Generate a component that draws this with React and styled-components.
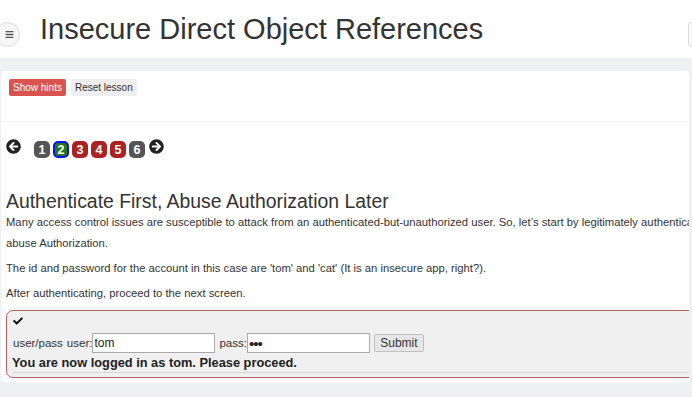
import React from "react";
import styled, { createGlobalStyle } from "styled-components";
import { FaArrowCircleLeft, FaArrowCircleRight, FaBars, FaCheck } from "react-icons/fa";

const GlobalStyle = createGlobalStyle`
  html, body {
    margin: 0;
    padding: 0;
    background: #ffffff;
    overflow: hidden;
  }
  body {
    font-family: "Liberation Sans", Arial, sans-serif;
    color: #333333;
  }
`;

const Page = styled.div`
  width: 692px;
  height: 397px;
  display: flex;
  flex-direction: column;
  overflow: hidden;
`;

const Header = styled.header`
  height: 58px;
  flex-shrink: 0;
  display: flex;
  align-items: center;
  background: #ffffff;
`;

const MenuButton = styled.button`
  width: 25px;
  height: 25px;
  margin: 10px 0 0 -5px;
  padding: 0 0 0 3px;
  border-radius: 50%;
  border: 1px solid #dddddd;
  background: #f6f6f6;
  color: #555555;
  display: flex;
  align-items: center;
  justify-content: center;
  font-size: 9px;
`;

const Title = styled.h1`
  flex: 1;
  margin: 0 0 0 20px;
  font-size: 29px;
  font-weight: 400;
  color: #333333;
  line-height: 1;
  padding-top: 1px;
`;

const HeaderStub = styled.div`
  width: 10px;
  height: 23px;
  margin: 10px -8px 0 0;
  border: 1px solid #dddddd;
  border-radius: 3px;
  background: #f8f8f8;
`;

const Main = styled.main`
  flex: 1;
  display: flex;
  flex-direction: column;
  background: #eef0f4;
  padding: 13px 3px 15px 1px;
  min-height: 0;
`;

const HintsBar = styled.div`
  height: 51px;
  box-sizing: border-box;
  padding: 8px 8px;
  background: #ffffff;
  border-radius: 4px 4px 0 0;
  border-bottom: 1px solid #f1f2f4;
  display: flex;
  align-items: flex-start;
  gap: 5px;
`;

const BarButton = styled.button`
  height: 17px;
  padding: 0 4px;
  border: none;
  border-radius: 2px;
  font-family: "Liberation Sans", Arial, sans-serif;
  font-size: 10px;
  background: ${(p) => (p.$danger ? "#d9534f" : "#eeeeee")};
  color: ${(p) => (p.$danger ? "#ffffff" : "#333333")};
`;

const LessonBody = styled.section`
  flex: 1;
  background: #ffffff;
  overflow: hidden;
  padding: 0 0 0 5px;
  border-radius: 0 0 4px 4px;
`;

const LessonInner = styled.div`
  width: 960px;
`;

const Pager = styled.nav`
  display: flex;
  align-items: center;
  gap: 3px;
  margin-top: 17px;
  height: 19px;
`;

const ArrowIcon = styled.span`
  display: flex;
  font-size: 15px;
  color: #222222;
  margin: ${(p) => p.$margin || "0"};
  align-self: flex-start;
`;

const PageBox = styled.span`
  width: 16px;
  height: 17px;
  box-sizing: border-box;
  border-radius: 5px;
  display: flex;
  align-items: center;
  justify-content: center;
  font-size: 12.5px;
  font-weight: 700;
  color: #ffffff;
  background: ${(p) => p.$bg};
  border: ${(p) => (p.$current ? "2px solid #0a14f0" : "none")};
  margin-top: 2px;
`;

const Heading = styled.h2`
  margin: 32px 0 0;
  font-size: 19.4px;
  font-weight: 400;
  line-height: 22px;
  color: #333333;
`;

const Para = styled.p`
  margin: 0 0 4px;
  font-size: 11.25px;
  line-height: 21px;
  color: #333333;
`;

const AttackBox = styled.div`
  margin-top: 6px;
  border: 1px solid #b35e5e;
  border-radius: 7px;
  background: #f0f0f0;
  padding: 5px 0 4px 5px;
  box-sizing: border-box;
`;

const CheckIcon = styled.div`
  font-size: 10px;
  color: #111111;
  height: 11px;
  padding-left: 1px;
  display: flex;
`;

const FormRow = styled.form`
  display: flex;
  align-items: center;
  margin-top: 6px;
  font-size: 11.5px;
  color: #333333;
`;

const Label = styled.span`
  margin-left: ${(p) => p.$gap || 0}px;
`;

const TextInput = styled.input`
  width: 123px;
  height: 20px;
  box-sizing: border-box;
  border: 1px solid #aaaaaa;
  padding: 0 1px;
  font-family: "Liberation Sans", Arial, sans-serif;
  font-size: ${(p) => (p.type === "password" ? "15px" : "12px")};
  letter-spacing: ${(p) => (p.type === "password" ? "-1px" : "0")};
  color: #222222;
  background: #ffffff;
`;

const SubmitButton = styled.button`
  margin-left: 4px;
  width: 50px;
  height: 18px;
  padding: 0;
  border: 1px solid #c0c0c0;
  border-radius: 2px;
  background: #e6e6e6;
  font-family: "Liberation Sans", Arial, sans-serif;
  font-size: 12px;
  color: #333333;
`;

const Feedback = styled.div`
  margin-top: 2px;
  font-size: 12.8px;
  font-weight: 700;
  line-height: 15px;
  color: #222222;
  padding-bottom: 2px;
  border-bottom: 1px solid #d6d6d6;
`;

const pages = [
  { n: 1, bg: "#555555" },
  { n: 2, bg: "#23781c", current: true },
  { n: 3, bg: "#ab2222" },
  { n: 4, bg: "#ab2222" },
  { n: 5, bg: "#ab2222" },
  { n: 6, bg: "#555555" },
];

export default function App() {
  return (
    <Page>
      <GlobalStyle />
      <Header>
        <MenuButton aria-label="menu">
          <FaBars />
        </MenuButton>
        <Title>Insecure Direct Object References</Title>
        <HeaderStub />
      </Header>
      <Main>
        <HintsBar>
          <BarButton $danger>Show hints</BarButton>
          <BarButton>Reset lesson</BarButton>
        </HintsBar>
        <LessonBody>
          <LessonInner>
            <Pager>
              <ArrowIcon $margin="0 10px 0 0">
                <FaArrowCircleLeft />
              </ArrowIcon>
              {pages.map((p) => (
                <PageBox key={p.n} $bg={p.bg} $current={p.current}>
                  {p.n}
                </PageBox>
              ))}
              <ArrowIcon $margin="0 0 0 1px">
                <FaArrowCircleRight />
              </ArrowIcon>
            </Pager>
            <Heading>Authenticate First, Abuse Authorization Later</Heading>
            <Para>
              Many access control issues are susceptible to attack from an
              authenticated-but-unauthorized user. So, let’s start by
              legitimately authenticating. Then, we will look for ways to bypass
              or
              <br />
              abuse Authorization.
            </Para>
            <Para>
              The id and password for the account in this case are 'tom' and
              'cat' (It is an insecure app, right?).
            </Para>
            <Para>After authenticating, proceed to the next screen.</Para>
            <AttackBox>
              <CheckIcon>
                <FaCheck />
              </CheckIcon>
              <FormRow onSubmit={(e) => e.preventDefault()}>
                <Label $gap={1}>user/pass</Label>
                <Label $gap={4}>user:</Label>
                <TextInput type="text" defaultValue="tom" />
                <Label $gap={4}>pass:</Label>
                <TextInput type="password" defaultValue="cat" />
                <SubmitButton type="submit">Submit</SubmitButton>
              </FormRow>
              <Feedback>You are now logged in as tom. Please proceed.</Feedback>
            </AttackBox>
          </LessonInner>
        </LessonBody>
      </Main>
    </Page>
  );
}
